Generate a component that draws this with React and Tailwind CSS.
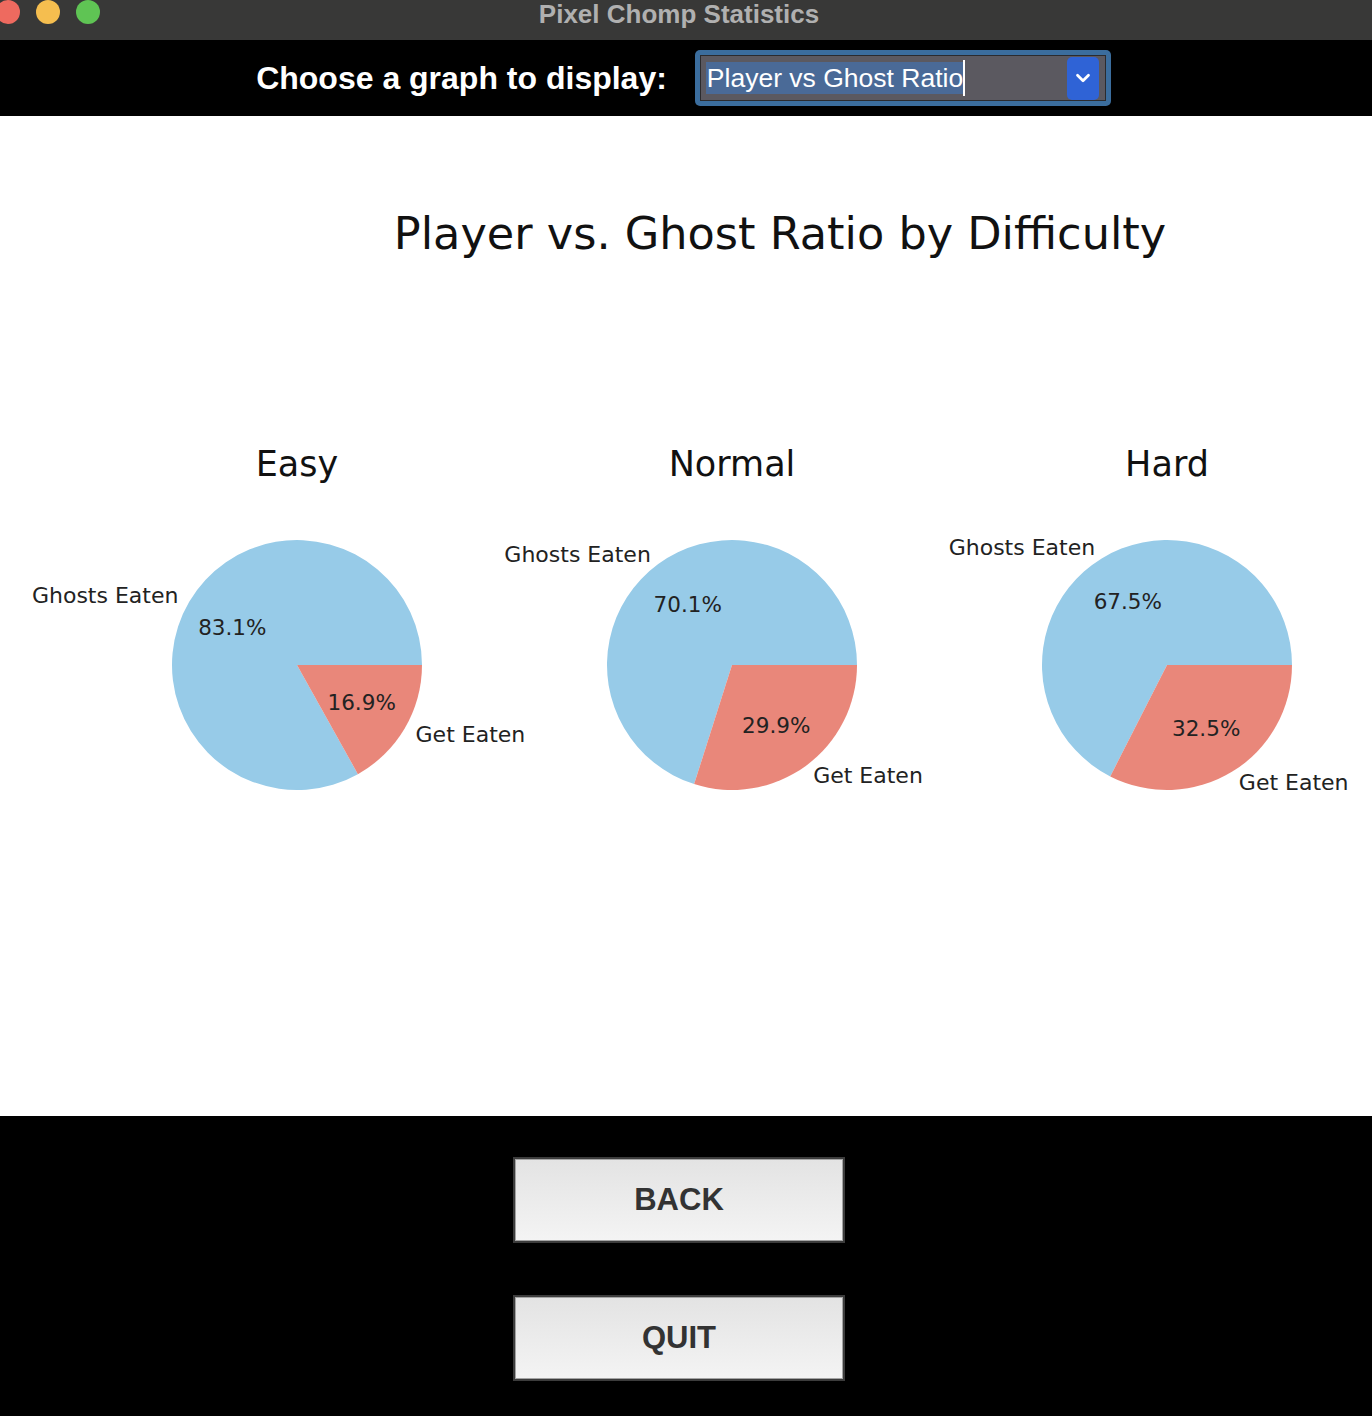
import { ChevronDown } from 'lucide-react';

const pies = [
  { title: 'Easy', ghosts: 83.1 },
  { title: 'Normal', ghosts: 70.1 },
  { title: 'Hard', ghosts: 67.5 },
];

const R = 125;
const C = 125;

// matplotlib style: start at 3 o'clock, go counterclockwise
const pt = (deg, r) => {
  const a = (deg * Math.PI) / 180;
  return [C + r * Math.cos(a), C - r * Math.sin(a)];
};

const wedge = (from, to) => {
  const [x1, y1] = pt(from, R);
  const [x2, y2] = pt(to, R);
  const large = to - from > 180 ? 1 : 0;
  return `M ${C} ${C} L ${x1} ${y1} A ${R} ${R} 0 ${large} 0 ${x2} ${y2} Z`;
};

function Pie({ title, ghosts }) {
  const split = (ghosts / 100) * 360;
  const slices = [
    { label: 'Ghosts Eaten', pct: ghosts, from: 0, to: split, color: '#97cbe8' },
    { label: 'Get Eaten', pct: 100 - ghosts, from: split, to: 360, color: '#e9877a' },
  ];

  return (
    <div className="flex w-[250px] flex-col items-center">
      <h2 className="text-[35px] leading-none text-[#111]" style={{ fontFamily: '"DejaVu Sans", sans-serif' }}>
        {title}
      </h2>
      <svg width="250" height="250" viewBox="0 0 250 250" className="mt-[58px] overflow-visible">
        {slices.map((s) => (
          <path key={s.label} d={wedge(s.from, s.to)} fill={s.color} />
        ))}
        {slices.map((s) => {
          const mid = (s.from + s.to) / 2;
          const [lx, ly] = pt(mid, R * 1.1);
          const [px, py] = pt(mid, R * 0.6);
          return (
            <g key={s.label + '-t'} fontFamily="DejaVu Sans, sans-serif" fill="#222">
              <text x={lx} y={ly} fontSize="22" textAnchor={lx > C ? 'start' : 'end'} dominantBaseline="central">
                {s.label}
              </text>
              <text x={px} y={py} fontSize="21.5" textAnchor="middle" dominantBaseline="central">
                {s.pct.toFixed(1)}%
              </text>
            </g>
          );
        })}
      </svg>
    </div>
  );
}

export default function App() {
  return (
    <div className="flex h-[1416px] w-full flex-col overflow-hidden bg-black" style={{ fontFamily: '"Liberation Sans", Arial, sans-serif' }}>
      {/* window title bar */}
      <div className="flex h-10 shrink-0 items-start bg-[#383837]">
        <div className="-ml-1 flex w-[104px] gap-4">
          <span className="h-6 w-6 rounded-full bg-[#ee6a5f]" />
          <span className="h-6 w-6 rounded-full bg-[#f5be4f]" />
          <span className="h-6 w-6 rounded-full bg-[#5fc454]" />
        </div>
        <div className="flex-1 pr-[114px] text-center text-[26px] font-bold leading-[28px] text-[#b0b0b0]">
          Pixel Chomp Statistics
        </div>
      </div>

      {/* graph selector */}
      <div className="flex h-[76px] shrink-0 items-center justify-center gap-7 pr-[5px]">
        <span className="text-[32px] font-bold leading-none text-white">Choose a graph to display:</span>
        <div className="flex h-[56px] w-[416px] items-stretch rounded-[5px] bg-[#3b6d9d] p-[5px]">
          <div className="flex flex-1 items-center border border-[#2b2b2e] bg-[#5b5960] pl-[5px] pr-[6px]">
            <span className="flex h-[32px] items-center bg-[#4a6a97] pl-[1px] text-[26.5px] leading-none text-white">
              Player vs Ghost Ratio
            </span>
            <span className="h-[36px] w-[2px] bg-white" />
            <span className="ml-auto flex h-[43px] w-[32px] items-center justify-center rounded-[5px] bg-[#2f63d6]">
              <ChevronDown size={22} strokeWidth={3} color="#ffffff" />
            </span>
          </div>
        </div>
      </div>

      {/* figure */}
      <div className="flex h-[1000px] shrink-0 flex-col bg-white">
        <h1
          className="mt-[96px] pl-[188px] text-center text-[44.6px] leading-none text-[#111]"
          style={{ fontFamily: '"DejaVu Sans", sans-serif' }}
        >
          Player vs. Ghost Ratio by Difficulty
        </h1>
        <div className="mt-[190px] flex gap-[185px] pl-[172px]">
          {pies.map((p) => (
            <Pie key={p.title} {...p} />
          ))}
        </div>
      </div>

      {/* buttons */}
      <div className="flex flex-1 flex-col items-center gap-[52px] pr-[14px] pt-[41px]">
        {['BACK', 'QUIT'].map((label) => (
          <button
            key={label}
            className="flex h-[86px] w-[332px] items-center justify-center border-2 border-[#3c3c3c] bg-gradient-to-b from-[#e3e3e3] to-[#f4f4f4] text-[31px] font-bold text-[#333] shadow-[inset_0_0_0_1px_#a4a4a4]"
          >
            {label}
          </button>
        ))}
      </div>
    </div>
  );
}
